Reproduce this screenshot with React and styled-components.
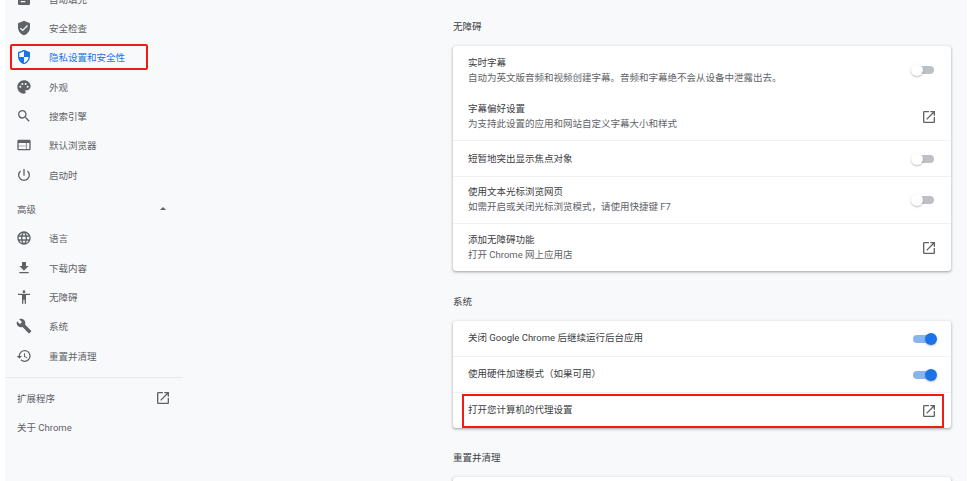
import React from "react";
import styled, { createGlobalStyle } from "styled-components";

const GlobalStyle = createGlobalStyle`
  html, body {
    margin: 0;
    height: 100%;
    background: #fff;
    overflow: hidden;
  }
  body {
    font-family: Roboto, "Noto Sans CJK SC", sans-serif;
  }
`;

const Page = styled.div`
  width: 962px;
  height: 481px;
  margin-left: 5px;
  background: #f8f9fa;
  display: flex;
  overflow: hidden;
`;

const Sidebar = styled.nav`
  width: 178px;
  flex: none;
  margin-top: -16px;
`;

const NavRow = styled.div`
  position: relative;
  height: 29.33px;
  display: flex;
  align-items: center;
  padding-left: 11px;
  font-size: 9.5px;
  color: ${({ $active }) => ($active ? "#1a73e8" : "#5f6368")};

  ${({ $marked }) =>
    $marked &&
    `&::after {
      content: "";
      position: absolute;
      left: 5px;
      top: 1px;
      width: 138px;
      height: 26px;
      box-sizing: border-box;
      border: 2px solid #f01c14;
      border-radius: 2px;
    }`}
`;

const IconSlot = styled.span`
  width: 33px;
  height: 16px;
  flex: none;
  display: flex;
  align-items: center;
  svg {
    width: 16px;
    height: 16px;
    fill: currentColor;
  }
`;

const AdvancedRow = styled(NavRow)`
  margin-top: 5px;
  justify-content: space-between;
  padding-left: 12px;
  padding-right: 17px;
`;

const Caret = styled.span`
  width: 0;
  height: 0;
  border-left: 3px solid transparent;
  border-right: 3px solid transparent;
  border-bottom: 3px solid #5f6368;
`;

const Divider = styled.div`
  height: 1px;
  background: #e8eaed;
  margin: 7px 0 5px;
`;

const PlainRow = styled(NavRow)`
  justify-content: space-between;
  padding-left: 12px;
  padding-right: 12px;
`;

const Main = styled.main`
  margin-left: 270px;
  width: 498px;
  flex: none;
`;

const SectionTitle = styled.h2`
  margin: 0;
  box-sizing: border-box;
  height: ${({ $h }) => $h}px;
  padding-bottom: 13px;
  font-size: 9.5px;
  line-height: 13px;
  font-weight: 400;
  color: #3c4043;
  display: flex;
  align-items: flex-end;
`;

const Card = styled.section`
  background: #fff;
  border-radius: 3px;
  box-shadow: 0 1px 2px rgba(60, 64, 67, 0.3), 0 1px 3px 1px rgba(60, 64, 67, 0.15);
  margin-bottom: ${({ $mb }) => $mb || 0}px;
`;

const Row = styled.div`
  height: ${({ $h }) => $h}px;
  box-sizing: border-box;
  display: flex;
  align-items: center;
  justify-content: space-between;
  padding: 0 14px 0 15px;
  border-top: ${({ $line }) => ($line ? "1px solid #f0f1f2" : "none")};
`;

const RowText = styled.div`
  display: flex;
  flex-direction: column;
  gap: 2px;
  margin-top: ${({ $up }) => ($up ? "-2px" : "0")};
`;

const RowTitle = styled.div`
  font-size: 9.5px;
  line-height: 13px;
  color: #3c4043;
  margin-top: ${({ $up }) => ($up ? "-2px" : "0")};
`;

const RowSub = styled.div`
  font-size: 9.5px;
  line-height: 13px;
  color: #5f6368;
`;

const Toggle = styled.span`
  position: relative;
  width: ${({ $on }) => ($on ? "21px" : "18px")};
  height: 8px;
  margin-right: 3px;
  border-radius: 4px;
  background: ${({ $on }) => ($on ? "#8ab4f0" : "#bdc1c6")};
  &::after {
    content: "";
    position: absolute;
    top: -2px;
    left: ${({ $on }) => ($on ? "12px" : "-5px")};
    width: 12px;
    height: 12px;
    border-radius: 50%;
    background: ${({ $on }) => ($on ? "#1a73e8" : "#fff")};
    box-shadow: 0 1px 2px rgba(60, 64, 67, 0.35);
  }
`;

const LaunchBox = styled.svg`
  width: 16px;
  height: 16px;
  fill: #5f6368;
  flex: none;
`;

const ProxyRow = styled(Row)`
  position: relative;
`;

const Marker = styled.div`
  position: absolute;
  left: 9px;
  right: 7px;
  top: 1px;
  height: 34px;
  box-sizing: border-box;
  border: 2px solid #f01c14;
  pointer-events: none;
`;

const Launch = () => (
  <LaunchBox viewBox="0 0 24 24">
    <path d="M19 19H5V5h7V3H5a2 2 0 0 0-2 2v14a2 2 0 0 0 2 2h14c1.1 0 2-.9 2-2v-7h-2v7zM14 3v2h3.59l-9.83 9.83 1.41 1.41L19 6.41V10h2V3h-7z" />
  </LaunchBox>
);

const navTop = [
  ["自动填充", "M19 3h-4.18C14.4 1.84 13.3 1 12 1c-1.3 0-2.4.84-2.82 2H5c-1.1 0-2 .9-2 2v14c0 1.1.9 2 2 2h14c1.1 0 2-.9 2-2V5c0-1.1-.9-2-2-2zm-7 0c.55 0 1 .45 1 1s-.45 1-1 1-1-.45-1-1 .45-1 1-1zm2 14H7v-2h7v2zm3-4H7v-2h10v2zm0-4H7V7h10v2z"],
  ["安全检查", "M12 1 3 5v6c0 5.55 3.84 10.74 9 12 5.16-1.26 9-6.45 9-12V5l-9-4zm-2 16-4-4 1.41-1.41L10 14.17l6.59-6.59L18 9l-8 8z"],
];

const navMid = [
  ["外观", "M12 2C6.49 2 2 6.49 2 12s4.49 10 10 10c1.38 0 2.5-1.12 2.5-2.5 0-.61-.23-1.2-.64-1.67a.528.528 0 0 1-.13-.33c0-.28.22-.5.5-.5H16c3.31 0 6-2.69 6-6 0-4.96-4.49-9-10-9zM6.5 13a1.5 1.5 0 1 1 0-3 1.5 1.5 0 0 1 0 3zm3-4a1.5 1.5 0 1 1 0-3 1.5 1.5 0 0 1 0 3zm5 0a1.5 1.5 0 1 1 0-3 1.5 1.5 0 0 1 0 3zm3 4a1.5 1.5 0 1 1 0-3 1.5 1.5 0 0 1 0 3z"],
  ["搜索引擎", "M15.5 14h-.79l-.28-.27A6.47 6.47 0 0 0 16 9.5 6.5 6.5 0 1 0 9.5 16c1.61 0 3.09-.59 4.23-1.57l.27.28v.79l5 4.99L20.49 19l-4.99-5zm-6 0C7.01 14 5 11.99 5 9.5S7.01 5 9.5 5 14 7.01 14 9.5 11.99 14 9.5 14z"],
  ["默认浏览器", "M20 4H4c-1.1 0-1.99.9-1.99 2L2 18c0 1.1.9 2 2 2h16c1.1 0 2-.9 2-2V6c0-1.1-.9-2-2-2zm-5 14H4v-4h11v4zm0-5H4V9h11v4zm5 5h-4V9h4v9z"],
  ["启动时", "M13 3h-2v10h2V3zm4.83 2.17-1.42 1.42A6.92 6.92 0 0 1 19 12c0 3.87-3.13 7-7 7s-7-3.13-7-7c0-2.28 1.09-4.3 2.58-5.42L6.17 5.17A8.932 8.932 0 0 0 3 12a9 9 0 0 0 18 0c0-2.74-1.23-5.18-3.17-6.83z"],
];

const navAdvanced = [
  ["语言", "M11.99 2C6.47 2 2 6.48 2 12s4.47 10 9.99 10C17.52 22 22 17.52 22 12S17.52 2 11.99 2zm6.93 6h-2.95a15.65 15.65 0 0 0-1.38-3.56A8.03 8.03 0 0 1 18.92 8zM12 4.04c.83 1.2 1.48 2.53 1.91 3.96h-3.82c.43-1.43 1.08-2.76 1.91-3.96zM4.26 14C4.1 13.36 4 12.69 4 12s.1-1.36.26-2h3.38c-.08.66-.14 1.32-.14 2s.06 1.34.14 2H4.26zm.82 2h2.95c.32 1.25.78 2.45 1.38 3.56A7.987 7.987 0 0 1 5.08 16zm2.95-8H5.08a7.987 7.987 0 0 1 4.33-3.56A15.65 15.65 0 0 0 8.03 8zM12 19.96c-.83-1.2-1.48-2.53-1.91-3.96h3.82c-.43 1.43-1.08 2.76-1.91 3.96zM14.34 14H9.66c-.09-.66-.16-1.32-.16-2s.07-1.35.16-2h4.68c.09.65.16 1.32.16 2s-.07 1.34-.16 2zm.25 5.56c.6-1.11 1.06-2.31 1.38-3.56h2.95a8.03 8.03 0 0 1-4.33 3.56zM16.36 14c.08-.66.14-1.32.14-2s-.06-1.34-.14-2h3.38c.16.64.26 1.31.26 2s-.1 1.36-.26 2h-3.38z"],
  ["下载内容", "M19 9h-4V3H9v6H5l7 7 7-7zM5 18v2h14v-2H5z"],
  ["无障碍", "M12 2c1.1 0 2 .9 2 2s-.9 2-2 2-2-.9-2-2 .9-2 2-2zm9 7h-6v13h-2v-6h-2v6H9V9H3V7h18v2z"],
  ["系统", "M22.7 19l-9.1-9.1c.9-2.3.4-5-1.5-6.9-2-2-5-2.4-7.4-1.3L9 6 6 9 1.6 4.7C.4 7.1.9 10.1 2.9 12.1c1.9 1.9 4.6 2.4 6.9 1.5l9.1 9.1c.4.4 1 .4 1.4 0l2.3-2.3c.5-.4.5-1.1.1-1.4z"],
  ["重置并清理", "M13 3a9 9 0 0 0-9 9H1l3.89 3.89.07.14L9 12H6c0-3.87 3.13-7 7-7s7 3.13 7 7-3.13 7-7 7c-1.93 0-3.68-.79-4.94-2.06l-1.42 1.42A8.954 8.954 0 0 0 13 21a9 9 0 0 0 0-18zm-1 5v5l4.28 2.54.72-1.21-3.5-2.08V8H12z"],
];

const shieldPath = "M12 1 3 5v6c0 5.55 3.84 10.74 9 12 5.16-1.26 9-6.45 9-12V5l-9-4zm0 10.99h7c-.53 4.12-3.28 7.79-7 8.94V12H5V6.3l7-3.11v8.8z";

const NavItem = ({ label, d, active, marked }) => (
  <NavRow $active={active} $marked={marked}>
    <IconSlot>
      <svg viewBox="0 0 24 24"><path d={d} /></svg>
    </IconSlot>
    {label}
  </NavRow>
);

export default function App() {
  return (
    <Page>
      <GlobalStyle />
      <Sidebar>
        {navTop.map(([label, d]) => <NavItem key={label} label={label} d={d} />)}
        <NavItem label="隐私设置和安全性" d={shieldPath} active marked />
        {navMid.map(([label, d]) => <NavItem key={label} label={label} d={d} />)}
        <AdvancedRow>高级<Caret /></AdvancedRow>
        {navAdvanced.map(([label, d]) => <NavItem key={label} label={label} d={d} />)}
        <Divider />
        <PlainRow>扩展程序<Launch /></PlainRow>
        <PlainRow>关于 Chrome</PlainRow>
      </Sidebar>
      <Main>
        <SectionTitle $h={46}>无障碍</SectionTitle>
        <Card $mb={16}>
          <Row $h={47}>
            <RowText>
              <RowTitle>实时字幕</RowTitle>
              <RowSub>自动为英文版音频和视频创建字幕。音频和字幕绝不会从设备中泄露出去。</RowSub>
            </RowText>
            <Toggle />
          </Row>
          <Row $h={47}>
            <RowText $up>
              <RowTitle>字幕偏好设置</RowTitle>
              <RowSub>为支持此设置的应用和网站自定义字幕大小和样式</RowSub>
            </RowText>
            <Launch />
          </Row>
          <Row $h={36} $line><RowTitle>短暂地突出显示焦点对象</RowTitle><Toggle /></Row>
          <Row $h={47} $line>
            <RowText $up>
              <RowTitle>使用文本光标浏览网页</RowTitle>
              <RowSub>如需开启或关闭光标浏览模式，请使用快捷键 F7</RowSub>
            </RowText>
            <Toggle />
          </Row>
          <Row $h={48} $line>
            <RowText $up>
              <RowTitle>添加无障碍功能</RowTitle>
              <RowSub>打开 Chrome 网上应用店</RowSub>
            </RowText>
            <Launch />
          </Row>
        </Card>
        <SectionTitle $h={34}>系统</SectionTitle>
        <Card $mb={9}>
          <Row $h={35}><RowTitle $up>关闭 Google Chrome 后继续运行后台应用</RowTitle><Toggle $on /></Row>
          <Row $h={36} $line><RowTitle $up>使用硬件加速模式（如果可用）</RowTitle><Toggle $on /></Row>
          <ProxyRow $h={36} $line>
            <RowTitle $up>打开您计算机的代理设置</RowTitle>
            <Launch />
            <Marker />
          </ProxyRow>
        </Card>
        <SectionTitle $h={40}>重置并清理</SectionTitle>
        <Card><Row $h={40} /></Card>
      </Main>
    </Page>
  );
}
